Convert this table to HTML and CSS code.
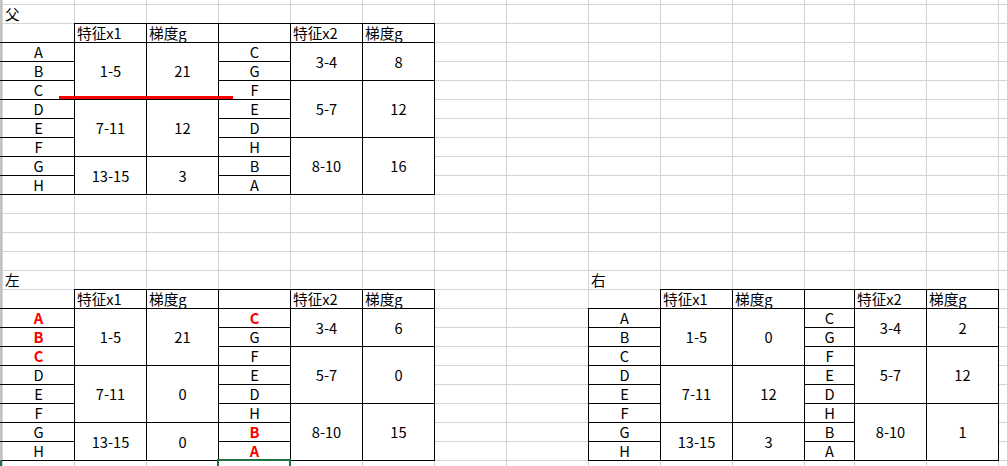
FILE: index.html
```html
<!DOCTYPE html>
<html lang="zh-CN">
<head>
<meta charset="utf-8">
<title>Sheet</title>
<link rel="stylesheet" href="styles.css">
</head>
<body>
<div class="sheet">
  <div class="label lab-a r1">父</div>
  <div class="tbl tbl-left top">
    <div class="nb"></div>
    <div class="cell hd">特征x1</div>
    <div class="cell hd">梯度g</div>
    <div class="cell"></div>
    <div class="cell hd">特征x2</div>
    <div class="cell hd">梯度g</div>

    <div class="cell key">A</div>
    <div class="cell m3">1-5</div>
    <div class="cell m3">21</div>
    <div class="cell">C</div>
    <div class="cell m2">3-4</div>
    <div class="cell m2">8</div>

    <div class="cell key">B</div>
    <div class="cell">G</div>

    <div class="cell key">C</div>
    <div class="cell">F</div>
    <div class="cell m3">5-7</div>
    <div class="cell m3">12</div>

    <div class="cell key">D</div>
    <div class="cell m3">7-11</div>
    <div class="cell m3">12</div>
    <div class="cell">E</div>

    <div class="cell key">E</div>
    <div class="cell">D</div>

    <div class="cell key">F</div>
    <div class="cell">H</div>
    <div class="cell m3">8-10</div>
    <div class="cell m3">16</div>

    <div class="cell key">G</div>
    <div class="cell m2">13-15</div>
    <div class="cell m2">3</div>
    <div class="cell">B</div>

    <div class="cell key">H</div>
    <div class="cell">A</div>
  </div>

  <div class="label lab-a r15">左</div>
  <div class="tbl tbl-left bottom">
    <div class="nb"></div>
    <div class="cell hd">特征x1</div>
    <div class="cell hd">梯度g</div>
    <div class="cell"></div>
    <div class="cell hd">特征x2</div>
    <div class="cell hd">梯度g</div>

    <div class="cell key hl">A</div>
    <div class="cell m3">1-5</div>
    <div class="cell m3">21</div>
    <div class="cell hl">C</div>
    <div class="cell m2">3-4</div>
    <div class="cell m2">6</div>

    <div class="cell key hl">B</div>
    <div class="cell">G</div>

    <div class="cell key hl">C</div>
    <div class="cell">F</div>
    <div class="cell m3">5-7</div>
    <div class="cell m3">0</div>

    <div class="cell key">D</div>
    <div class="cell m3">7-11</div>
    <div class="cell m3">0</div>
    <div class="cell">E</div>

    <div class="cell key">E</div>
    <div class="cell">D</div>

    <div class="cell key">F</div>
    <div class="cell">H</div>
    <div class="cell m3">8-10</div>
    <div class="cell m3">15</div>

    <div class="cell key">G</div>
    <div class="cell m2">13-15</div>
    <div class="cell m2">0</div>
    <div class="cell hl">B</div>

    <div class="cell key">H</div>
    <div class="cell hl">A</div>
  </div>

  <div class="label lab-i r15">右</div>
  <div class="tbl tbl-right bottom">
    <div class="nb"></div>
    <div class="cell hd">特征x1</div>
    <div class="cell hd">梯度g</div>
    <div class="cell"></div>
    <div class="cell hd">特征x2</div>
    <div class="cell hd">梯度g</div>

    <div class="cell">A</div>
    <div class="cell m3">1-5</div>
    <div class="cell m3">0</div>
    <div class="cell">C</div>
    <div class="cell m2">3-4</div>
    <div class="cell m2">2</div>

    <div class="cell">B</div>
    <div class="cell">G</div>

    <div class="cell">C</div>
    <div class="cell">F</div>
    <div class="cell m3">5-7</div>
    <div class="cell m3">12</div>

    <div class="cell">D</div>
    <div class="cell m3">7-11</div>
    <div class="cell m3">12</div>
    <div class="cell">E</div>

    <div class="cell">E</div>
    <div class="cell">D</div>

    <div class="cell">F</div>
    <div class="cell">H</div>
    <div class="cell m3">8-10</div>
    <div class="cell m3">1</div>

    <div class="cell">G</div>
    <div class="cell m2">13-15</div>
    <div class="cell m2">3</div>
    <div class="cell">B</div>

    <div class="cell">H</div>
    <div class="cell">A</div>
  </div>

  <div class="rowsel"></div>
  <div class="sel"></div>
  <div class="strike"></div>
</div>
</body>
</html>
```
FILE: styles.css
```css
* { box-sizing: border-box; }
html, body {
  margin: 0;
  padding: 0;
  background: #fff;
}
body {
  font-family: "Noto Sans CJK SC", "Noto Sans", sans-serif;
  font-size: 14.67px;
  color: #000;
}
.sheet {
  position: relative;
  width: 1007px;
  height: 466px;
  overflow: hidden;
  display: grid;
  grid-template-columns: 2px repeat(7, 72px) 82px 72px 72px 72px 50px 72px 72px 1fr;
  grid-template-rows: 4px repeat(25, 19px);
  background-color: #fff;
  background-image:
    linear-gradient(#c2c2c2, #c2c2c2),
    linear-gradient(#d4d4d4 1px, transparent 1px),
    linear-gradient(#d4d4d4, #d4d4d4),
    linear-gradient(#d4d4d4, #d4d4d4),
    linear-gradient(#d4d4d4, #d4d4d4),
    linear-gradient(#d4d4d4, #d4d4d4),
    linear-gradient(#d4d4d4, #d4d4d4),
    linear-gradient(#d4d4d4, #d4d4d4),
    linear-gradient(#d4d4d4, #d4d4d4),
    linear-gradient(#d4d4d4, #d4d4d4),
    linear-gradient(#d4d4d4, #d4d4d4),
    linear-gradient(#d4d4d4, #d4d4d4),
    linear-gradient(#d4d4d4, #d4d4d4),
    linear-gradient(#d4d4d4, #d4d4d4),
    linear-gradient(#d4d4d4, #d4d4d4),
    linear-gradient(#d4d4d4, #d4d4d4),
    linear-gradient(#d4d4d4, #d4d4d4);
  background-size:
    2px 100%,
    100% 19px,
    1px 100%, 1px 100%, 1px 100%, 1px 100%, 1px 100%,
    1px 100%, 1px 100%, 1px 100%, 1px 100%, 1px 100%,
    1px 100%, 1px 100%, 1px 100%, 1px 100%, 1px 100%;
  background-position:
    0 0,
    0 4px,
    2px 0, 74px 0, 146px 0, 218px 0, 290px 0,
    362px 0, 434px 0, 506px 0, 588px 0, 660px 0,
    732px 0, 804px 0, 854px 0, 926px 0, 998px 0;
  background-repeat:
    no-repeat,
    repeat-y,
    no-repeat, no-repeat, no-repeat, no-repeat, no-repeat,
    no-repeat, no-repeat, no-repeat, no-repeat, no-repeat,
    no-repeat, no-repeat, no-repeat, no-repeat, no-repeat;
}
.label {
  padding: 1px 0 0 3px;
  line-height: 18px;
  white-space: nowrap;
}
.lab-a { grid-column: 2; }
.lab-i { grid-column: 10; }
.r1 { grid-row: 2; }
.r15 { grid-row: 16; }

.tbl {
  display: grid;
  grid-template-rows: repeat(9, 19px);
}
.tbl-left {
  grid-column: 1 / 8;
  grid-template-columns: 74px repeat(5, 72px);
}
.tbl-right {
  grid-column: 10 / 16;
  grid-template-columns: 72px 72px 72px 50px 72px 72px;
}
.top { grid-row: 3 / 12; }
.bottom { grid-row: 17 / 26; }

.cell {
  border: 1px solid #000;
  margin: 0 -1px -1px 0;
  background: #fff;
  text-align: center;
  line-height: 18px;
  white-space: nowrap;
}
.hd {
  text-align: left;
  padding-left: 2px;
}
.key {
  border-left: none;
  background: transparent;
  padding-left: 3px;
}
.m2, .m3 {
  display: flex;
  align-items: center;
  justify-content: center;
}
.m2 { grid-row: span 2; }
.m3 { grid-row: span 3; }
.hl {
  color: #ff0000;
  font-weight: bold;
}

.rowsel {
  grid-column: 1;
  grid-row: 26;
  background: #217346;
}
.sel {
  grid-column: 5;
  grid-row: 26;
  margin: -1px -1px 0 -1px;
  border: 2px solid #217346;
  border-bottom: none;
  position: relative;
  z-index: 2;
}
.strike {
  position: absolute;
  left: 59px;
  top: 96px;
  width: 174px;
  height: 3px;
  background: #ff0000;
  z-index: 3;
}
```
